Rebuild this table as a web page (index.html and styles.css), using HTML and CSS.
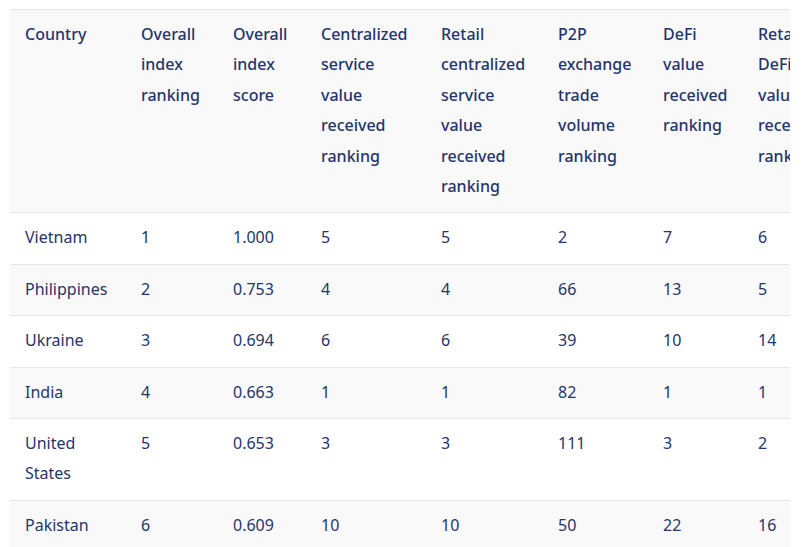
FILE: index.html
```html
<!DOCTYPE html>
<html>
<head>
<meta charset="utf-8">
<link rel="stylesheet" href="styles.css">
</head>
<body>
<div class="page">
  <div class="scroller">
    <table class="rank-table">
      <colgroup>
        <col class="c1"><col class="c2"><col class="c3"><col class="c4"><col class="c5"><col class="c6"><col class="c7"><col class="c8">
      </colgroup>
      <thead>
        <tr>
          <th>Country</th>
          <th>Overall index ranking</th>
          <th>Overall index score</th>
          <th>Centralized service value received ranking</th>
          <th>Retail centralized service value received ranking</th>
          <th>P2P exchange trade volume ranking</th>
          <th>DeFi value received ranking</th>
          <th>Retail DeFi value received ranking</th>
        </tr>
      </thead>
      <tbody>
        <tr><td>Vietnam</td><td>1</td><td>1.000</td><td>5</td><td>5</td><td>2</td><td>7</td><td>6</td></tr>
        <tr><td>Philippines</td><td>2</td><td>0.753</td><td>4</td><td>4</td><td>66</td><td>13</td><td>5</td></tr>
        <tr><td>Ukraine</td><td>3</td><td>0.694</td><td>6</td><td>6</td><td>39</td><td>10</td><td>14</td></tr>
        <tr><td>India</td><td>4</td><td>0.663</td><td>1</td><td>1</td><td>82</td><td>1</td><td>1</td></tr>
        <tr><td>United States</td><td>5</td><td>0.653</td><td>3</td><td>3</td><td>111</td><td>3</td><td>2</td></tr>
        <tr><td>Pakistan</td><td>6</td><td>0.609</td><td>10</td><td>10</td><td>50</td><td>22</td><td>16</td></tr>
      </tbody>
    </table>
  </div>
</div>
</body>
</html>
```
FILE: styles.css
```css
html, body {
  margin: 0;
  padding: 0;
  background: #ffffff;
}
.page {
  padding: 9px 12px 0 10px;
}
.scroller {
  width: 780px;
  overflow: hidden;
}
.rank-table {
  border-collapse: collapse;
  table-layout: fixed;
  width: 823px;
  font-family: "Noto Sans", sans-serif;
  font-size: 16px;
  line-height: 30.4px;
  color: #25346b;
}
.c1 { width: 116px; }
.c2 { width: 92px; }
.c3 { width: 88px; }
.c4 { width: 120px; }
.c5 { width: 117px; }
.c6 { width: 105px; }
.c7 { width: 95px; }
.c8 { width: 90px; }
.rank-table th,
.rank-table td {
  text-align: left;
  vertical-align: top;
  padding: 9px 15px 11px;
  border-top: 1px solid #e6e6e6;
  border-bottom: 1px solid #e6e6e6;
}
.rank-table th {
  font-weight: 500;
  background: #f9f9f9;
  word-spacing: 100px;
}
.rank-table td {
  font-weight: 400;
}
.rank-table tbody tr:nth-child(even) td {
  background: #f9f9f9;
}
```
